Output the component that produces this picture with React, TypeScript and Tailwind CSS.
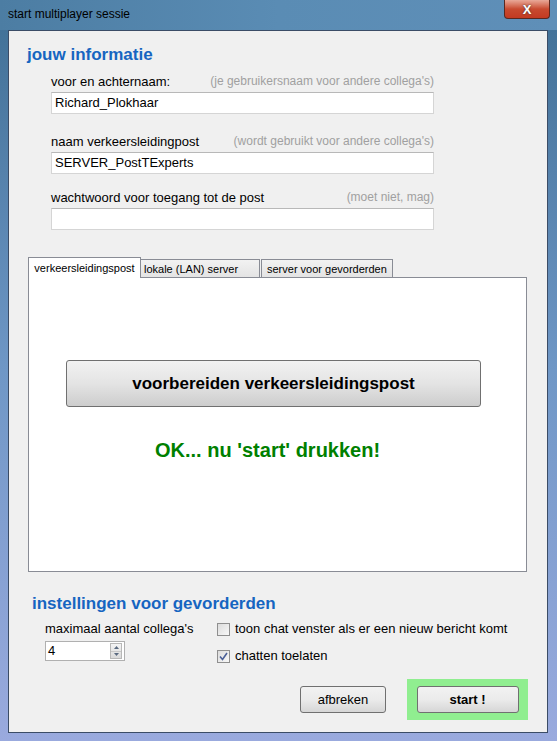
const font = "font-['Liberation_Sans','Arial',sans-serif]";

function Field({ label, hint, value, className = "" }: { label: string; hint: string; value: string; className?: string }) {
  return (
    <div className={`flex flex-col w-[383px] ${className}`}>
      <div className="flex justify-between items-end h-[22px]">
        <span className="text-[13px] text-black leading-none">{label}</span>
        <span className="text-[12px] text-[#a0a0a0] leading-none mb-[1px]">{hint}</span>
      </div>
      <div className="mt-[4px] h-[22px] bg-white border border-[#d5d5d5] border-t-[#b8b8b8] flex items-center px-[3px] text-[13px] text-black">
        {value}
      </div>
    </div>
  );
}

function Check({ checked, label }: { checked?: boolean; label: string }) {
  return (
    <div className="flex items-center gap-[5px] h-[20px]">
      <div className="w-[13px] h-[13px] border border-[#8f8f8f] bg-gradient-to-br from-[#dcdcdc] to-[#f8f8f8] flex items-center justify-center">
        {checked && (
          <svg width="9" height="9" viewBox="0 0 9 9">
            <path d="M1 4.5 L3.5 7.5 L8 1" fill="none" stroke="#4a5f97" strokeWidth="1.6" />
          </svg>
        )}
      </div>
      <span className="text-[13px] text-black">{label}</span>
    </div>
  );
}

export default function App() {
  return (
    <div className={`${font} w-[557px] h-[741px] relative flex flex-col bg-gradient-to-b from-[#3f6f95] via-[#6f97c6] to-[#9aaade] rounded-t-[6px]`}>
      <div className="h-[30px] flex items-center pl-[8px] pb-[2px] bg-gradient-to-r from-[#4c7da3] via-[#5a8cb4] to-[#5f8fb8]">
        <span className="text-[12px] text-black">start multiplayer sessie</span>
      </div>
      <div className="absolute top-0 right-[7px] w-[46px] h-[19px] rounded-b-[4px] border border-[#5a2820] border-t-0 bg-gradient-to-b from-[#e8a898] via-[#c84a30] to-[#c23a22] flex items-center justify-center">
        <span className="text-white font-bold text-[13px] leading-none [text-shadow:0_0_2px_#333]">X</span>
      </div>
      <div className="flex-1 ml-[8px] mr-[9px] mb-[8px] border border-[#3b4c66] bg-[#f0f0f0] flex flex-col">
        <div className="pl-[18px] pt-[13px] text-[17px] font-bold text-[#1665c1] leading-[22px]">jouw informatie</div>
        <div className="pl-[42px] flex flex-col">
          <Field label="voor en achternaam:" hint="(je gebruikersnaam voor andere collega's)" value="Richard_Plokhaar" />
          <Field className="mt-[12px]" label="naam verkeersleidingpost" hint="(wordt gebruikt voor andere collega's)" value="SERVER_PostTExperts" />
          <Field className="mt-[8px]" label="wachtwoord voor toegang tot de post" hint="(moet niet, mag)" value="" />
        </div>
        <div className="ml-[19px] mt-[27px] w-[499px] flex flex-col">
          <div className="flex items-end h-[21px] text-[11px]">
            <div className="h-[21px] w-[113px] bg-white border border-[#898c95] border-b-0 flex items-center justify-center text-black relative z-10">
              verkeersleidingspost
            </div>
            <div className="h-[19px] w-[119px] bg-gradient-to-b from-[#f2f2f2] to-[#e3e3e3] border border-[#898c95] border-l-0 border-b-0 flex items-center pl-[3px] text-black">
              lokale (LAN) server
            </div>
            <div className="h-[19px] w-[132px] ml-[1px] bg-gradient-to-b from-[#f2f2f2] to-[#e3e3e3] border border-[#898c95] border-b-0 flex items-center pl-[5px] text-black">
              server voor gevorderden
            </div>
          </div>
          <div className="h-[295px] -mt-[1px] bg-white border border-[#898c95] flex flex-col">
            <div className="mt-[82px] ml-[37px] w-[415px] h-[47px] rounded-[3px] border border-[#707070] bg-gradient-to-b from-[#f2f2f2] via-[#e4e4e4] to-[#cdcdcd] flex items-center justify-center text-[17px] font-bold text-black">
              voorbereiden verkeersleidingspost
            </div>
            <div className="mt-[31px] ml-[126px] text-[20px] font-bold text-[#008000] leading-[24px]">OK... nu 'start' drukken!</div>
          </div>
        </div>
        <div className="pl-[23px] pt-[21px] text-[17px] font-bold text-[#1665c1] leading-[22px]">instellingen voor gevorderden</div>
        <div className="flex pl-[36px] pt-[4px]">
          <div className="flex flex-col w-[172px]">
            <span className="text-[13px] text-black leading-[20px]">maximaal aantal collega's</span>
            <div className="mt-[2px] w-[80px] h-[20px] bg-white border border-[#b0b0b0] flex items-center justify-between pl-[2px] pr-[2px] text-[13px] text-black">
              <span>4</span>
              <div className="flex flex-col w-[12px] h-[16px] border border-[#b8b8b8] bg-gradient-to-b from-[#f4f4f4] to-[#dadada]">
                <div className="flex-1 flex items-center justify-center border-b border-[#c8c8c8]">
                  <svg width="5" height="3" viewBox="0 0 5 3"><path d="M0 3 L2.5 0 L5 3 Z" fill="#5a6a80" /></svg>
                </div>
                <div className="flex-1 flex items-center justify-center">
                  <svg width="5" height="3" viewBox="0 0 5 3"><path d="M0 0 L2.5 3 L5 0 Z" fill="#5a6a80" /></svg>
                </div>
              </div>
            </div>
          </div>
          <div className="flex flex-col gap-[7px]">
            <Check label="toon chat venster als er een nieuw bericht komt" />
            <Check checked label="chatten toelaten" />
          </div>
        </div>
        <div className="flex justify-end items-center pr-[19px] mt-auto mb-[12px] gap-[21px]">
          <div className="w-[86px] h-[27px] rounded-[3px] border border-[#707070] bg-gradient-to-b from-[#f2f2f2] via-[#ebebeb] to-[#d6d6d6] flex items-center justify-center text-[13px] text-black">
            afbreken
          </div>
          <div className="w-[121px] h-[41px] bg-[#90ee90] flex items-center justify-center">
            <div className="w-[102px] h-[27px] rounded-[3px] border border-[#707070] bg-gradient-to-b from-[#f2f2f2] via-[#ebebeb] to-[#d6d6d6] flex items-center justify-center text-[13px] font-bold text-black">
              start !
            </div>
          </div>
        </div>
      </div>
    </div>
  );
}
